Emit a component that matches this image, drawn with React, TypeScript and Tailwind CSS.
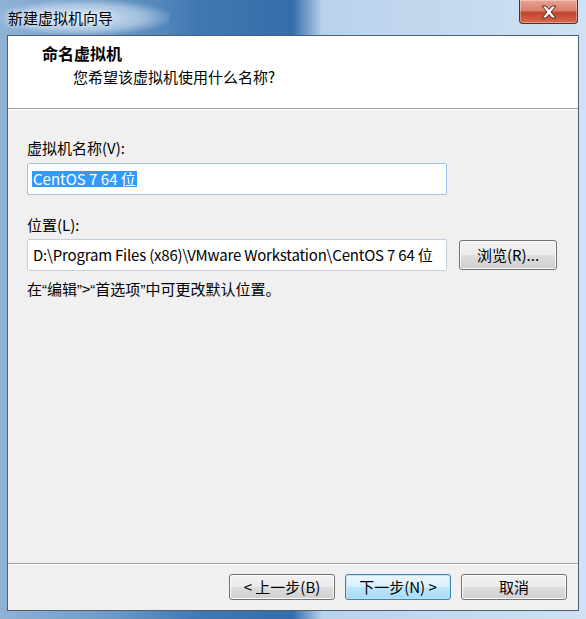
const font = "font-['Segoe_UI','Noto_Sans_CJK_SC','Noto_Sans',sans-serif]";

function Q({ children }: { children: string }) {
  return <span className="font-['Liberation_Sans',sans-serif]">{children}</span>;
}

function Win7Button({
  label,
  primary,
  className = '',
}: {
  label: string;
  primary?: boolean;
  className?: string;
}) {
  return (
    <div
      className={`flex items-center justify-center rounded-[3px] border text-[15px] text-black ${
        primary
          ? 'border-[#3c7fb1] bg-[linear-gradient(to_bottom,#eaf6fd_0%,#d9f0fc_50%,#bee6fd_50%,#a7d9f5_100%)] shadow-[inset_0_0_0_1px_#c4e5f6]'
          : 'border-[#707070] bg-[linear-gradient(to_bottom,#f2f2f2_0%,#ebebeb_50%,#dddddd_50%,#cfcfcf_100%)] shadow-[inset_0_0_0_1px_#fcfcfc]'
      } ${className}`}
    >
      {label}
    </div>
  );
}

function CloseButton() {
  return (
    <div className="absolute right-[8px] top-0 flex h-[24px] w-[59px] items-center justify-center rounded-b-[4px] border border-t-0 border-[#5a2a23] bg-[linear-gradient(to_bottom,#e8a493_0%,#d9826e_45%,#c1442c_55%,#d86a4f_100%)] shadow-[inset_0_0_0_1px_rgba(255,255,255,0.35)]">
      <svg width="20" height="16" viewBox="0 0 20 16">
        <path
          d="M3 2 L7 2 L10 5.5 L13 2 L17 2 L12 8 L17 14 L13 14 L10 10.5 L7 14 L3 14 L8 8 Z"
          fill="#ffffff"
          stroke="#4b2a24"
          strokeWidth="1"
          strokeLinejoin="round"
        />
      </svg>
    </div>
  );
}

export default function App() {
  return (
    <div
      className={`relative flex h-[619px] w-[586px] flex-col overflow-hidden bg-[linear-gradient(to_right,#8fb2d6_0%,#6f9bc8_18%,#3f78b2_34%,#346eaa_50%,#b9d2ec_55%,#c6daef_80%,#cfe1f3_100%)] ${font}`}
    >
      {/* title bar */}
      <div className="relative h-[35px] shrink-0">
        <div className="absolute left-0 top-0 h-[35px] w-[170px] bg-[radial-gradient(ellipse_at_center,rgba(235,243,250,0.85)_0%,rgba(220,234,247,0.5)_50%,rgba(200,220,240,0)_75%)]" />
        <div className="relative pl-[8px] pt-[8px] text-[15px] leading-[20px] text-black [text-shadow:0_0_6px_#ffffff]">
          新建虚拟机向导
        </div>
        <CloseButton />
      </div>

      {/* client area */}
      <div className="mx-[7px] flex h-[576px] flex-col border border-[#4b5f75] bg-[#f0f0f0] text-[15px] leading-[20px] text-black">
        {/* header */}
        <div className="h-[73px] shrink-0 border-b border-[#a0a0a0] bg-white pl-[34px] pt-[7px]">
          <div className="text-[16px] font-bold">命名虚拟机</div>
          <div className="mt-[4px] pl-[31px]">您希望该虚拟机使用什么名称?</div>
        </div>

        {/* body */}
        <div className="flex flex-1 flex-col border-t border-white pl-[19px] pt-[28px]">
          <div>虚拟机名称(V):</div>
          <div className="mt-[5px] flex h-[32px] w-[420px] items-center rounded-[2px] border border-[#9cc3e6] bg-white pl-[4px]">
            <span className="bg-[#3399ff] px-[1px] leading-[16px] text-white">CentOS 7 64 位</span>
          </div>

          <div className="mt-[20px]">位置(L):</div>
          <div className="mt-[4px] flex items-center gap-[12px]">
            <div className="flex h-[32px] w-[420px] items-center rounded-[2px] border border-[#c3d0dd] bg-white pl-[5px] tracking-[-0.2px]">
              D:\Program Files (x86)\VMware Workstation\CentOS 7 64 位
            </div>
            <Win7Button label="浏览(R)..." className="h-[30px] w-[98px]" />
          </div>

          <div className="mt-[8px]">
            在<Q>“</Q>编辑<Q>”</Q>&gt;<Q>“</Q>首选项<Q>”</Q>中可更改默认位置。
          </div>
        </div>

        {/* footer */}
        <div className="h-[47px] shrink-0 border-t border-[#a0a0a0]">
          <div className="flex h-full justify-end gap-[10px] border-t border-white pr-[11px] pt-[9px]">
            <Win7Button label="< 上一步(B)" className="h-[26px] w-[106px]" />
            <Win7Button label="下一步(N) >" primary className="h-[26px] w-[106px]" />
            <Win7Button label="取消" className="h-[26px] w-[106px]" />
          </div>
        </div>
      </div>
    </div>
  );
}
